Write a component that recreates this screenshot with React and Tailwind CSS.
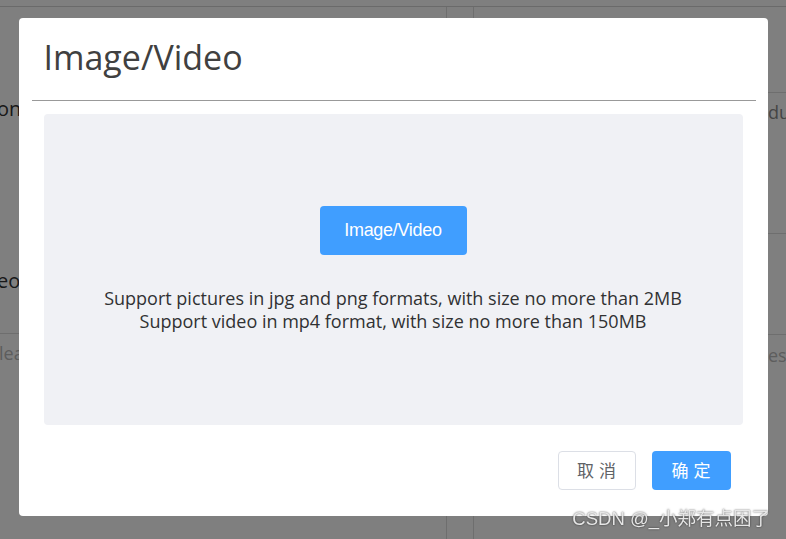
import React from 'react';

const sans = { fontFamily: '"Open Sans", "Noto Sans", "Noto Sans CJK SC", sans-serif' };

const UploadDialog = () => {
  return (
    <div className="w-[749px] h-[498px] bg-white rounded-[4px] flex flex-col" style={sans}>
      {/* Header */}
      <div className="h-[82px] px-[25px] pb-[4px] flex items-center">
        <h2 className="text-[34px] leading-none text-[#404040]">Image/Video</h2>
      </div>
      <div className="mx-[13px] mr-[12px] border-t border-[#999999]" />

      {/* Upload area */}
      <div className="px-[25px] pt-[13px]">
        <div className="h-[311px] bg-[#f0f1f5] rounded-[4px] flex flex-col items-center pt-[92px]">
          <button
            className="w-[147px] h-[49px] bg-[#409eff] rounded-[4px] text-white text-[18px] tracking-[-0.3px]"
            style={{ fontFamily: '"Liberation Sans", Arial, sans-serif' }}
          >
            Image/Video
          </button>
          <div className="mt-[32px] text-center text-[18px] leading-[23px] text-[#303133]">
            <p>Support pictures in jpg and png formats, with size no more than 2MB</p>
            <p>Support video in mp4 format, with size no more than 150MB</p>
          </div>
        </div>
      </div>

      {/* Footer */}
      <div className="flex justify-end gap-[16px] pt-[26px] pr-[37px]">
        <button className="w-[78px] h-[39px] border border-[#dcdfe6] rounded-[4px] text-[17px] text-[#606266] tracking-[5px] pl-[5px]">
          取消
        </button>
        <button className="w-[79px] h-[39px] bg-[#409eff] rounded-[4px] text-[17px] text-white tracking-[5px] pl-[5px]">
          确定
        </button>
      </div>
    </div>
  );
};

const App = () => {
  return (
    <div className="relative h-[539px] overflow-hidden bg-white" style={sans}>
      {/* Page behind the dialog */}
      <div className="pt-[6px] h-full">
        <div className="flex h-full border-t border-[#d4d4d4]">
          <div className="w-[447px] border-r border-[#dcdcdc] overflow-hidden whitespace-nowrap">
            <div className="h-[90px]" />
            <div className="text-[20px] leading-[24px] text-[#333] -ml-[3px]">on</div>
            <div className="h-[148px]" />
            <div className="text-[20px] leading-[24px] text-[#333] -ml-[3px]">eo</div>
            <div className="h-[40px]" />
            <div className="border-t border-[#dcdcdc] pt-[7px] text-[18px] leading-[24px] text-[#bbbbbb] -ml-[1px]">lease enter</div>
          </div>
          <div className="w-[26px]" />
          <div className="flex-1 border-l border-[#dcdcdc] overflow-hidden whitespace-nowrap">
            <div className="h-[85px]" />
            <div className="border-t border-[#dcdcdc] pt-[7px] h-[141px]">
              <div className="ml-[294px] text-[18px] leading-[24px] text-[#8a8a8a]">duct</div>
            </div>
            <div className="border-t border-[#dcdcdc] h-[101px]" />
            <div className="border-t border-[#dcdcdc] pt-[8px]">
              <div className="ml-[294px] text-[18px] leading-[24px] text-[#bbbbbb]">es, etc</div>
            </div>
          </div>
        </div>
      </div>

      {/* Overlay */}
      <div className="fixed inset-0 bg-black/50 flex justify-center pt-[18px]">
        <UploadDialog />
      </div>

      {/* Watermark */}
      <div
        className="absolute right-[16px] bottom-[11px] text-[18.5px] leading-none text-[#e6e6e6] [text-shadow:0_0_2px_rgba(0,0,0,0.7)]"
        style={{ fontFamily: '"Liberation Sans", "Noto Sans CJK SC", sans-serif' }}
      >
        CSDN @_小郑有点困了
      </div>
    </div>
  );
};

export default App;
